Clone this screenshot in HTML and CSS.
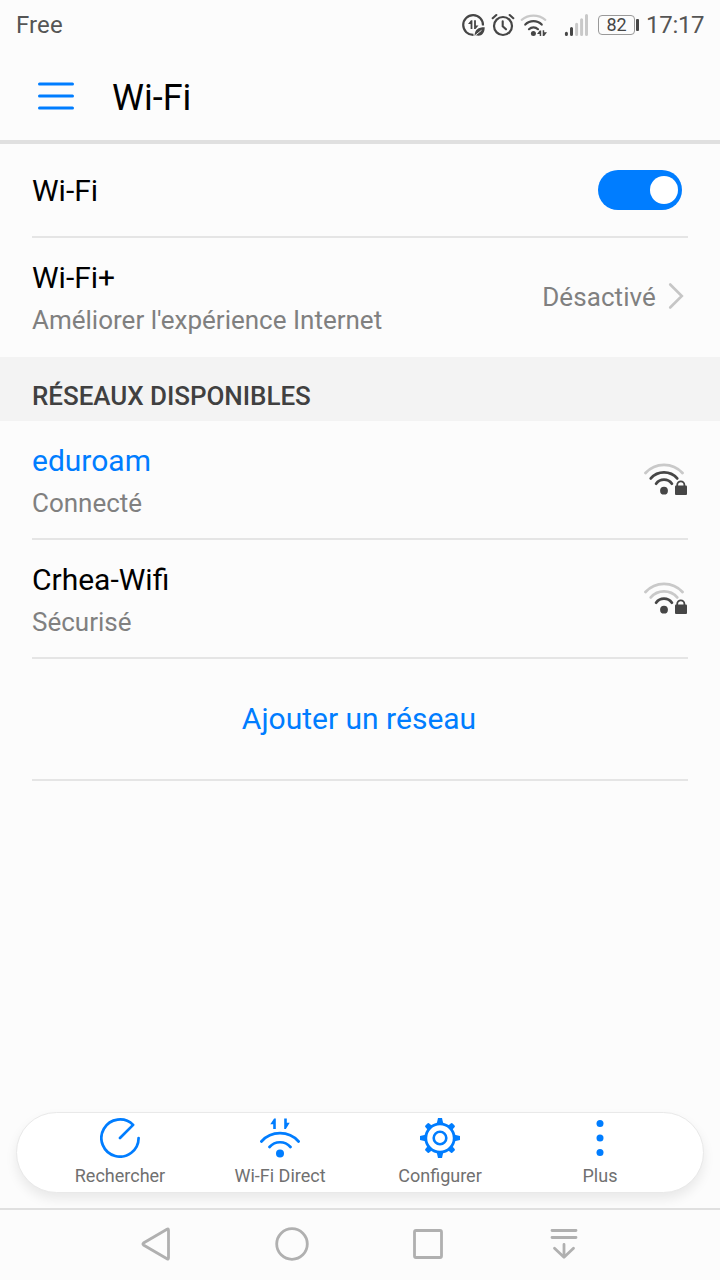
FILE: index.html
```html
<!DOCTYPE html>
<html lang="fr">
<head>
<meta charset="utf-8">
<title>Wi-Fi</title>
<link rel="stylesheet" href="styles.css">
</head>
<body>
<div class="screen">
  <div class="status">
    <span class="carrier">Free</span>
    <div class="status-icons">
      <svg class="saver" width="24" height="24" viewBox="461 12 24 24">
        <path d="M473.5 33.9A9.9 9.9 0 1 1 483 24.5" fill="none" stroke="#464646" stroke-width="2.2"/>
        <path d="M472.4 19.2V28H470.6V23H468L471 19.2ZM474.1 19.2H475.9V24.4H478.5L475.5 28H474.1Z" fill="#464646"/>
        <path d="M474.5 35C475 28.5 478 26.3 484.7 26.3C484.7 33 481 36 475.8 34.3Z" fill="#464646"/>
        <path d="M474.5 35L481.5 29.3" stroke="#fcfcfc" stroke-width=".9"/>
      </svg>
      <svg class="alarm" width="24" height="24" viewBox="491 12 24 24" fill="none" stroke="#464646" stroke-linecap="round">
        <circle cx="503" cy="25" r="9" stroke-width="2.2"/>
        <path d="M502.7 20.3V25.2L506 28.3M492.7 17.2L496.3 14M509.7 14L513.3 17.2" stroke-width="2.1"/>
      </svg>
      <svg class="wifi-status" width="28" height="24" viewBox="520 12 28 24" fill="none" stroke-width="2.2" stroke-linecap="round">
        <path d="M521.7 18.8A19 19 0 0 1 545.3 18.8" stroke="#c9c9c9"/>
        <path d="M525.3 23.6A11.5 11.5 0 0 1 541.7 23.6M529 28.2A6.5 6.5 0 0 1 538 28.2" stroke="#464646"/>
        <circle cx="533.4" cy="32.4" r="2.5" fill="#464646"/>
        <path d="M541.2 29.5V35H539.7V33H537L539.7 29.5ZM542.7 29.3H544.2V31.3H547L544.2 35H542.7Z" fill="#464646"/>
      </svg>
      <svg class="signal" width="24" height="24" viewBox="564 12 24 24" stroke-width="3" stroke-linecap="round">
        <path d="M566.4 32.3V33.4M571.5 27.6V33.4" stroke="#464646"/>
        <path d="M576.6 23.2V33.4M581.6 18.8V33.4M586.5 14.5V33.4" stroke="#c9c9c9"/>
      </svg>
      <div class="battery"><span>82</span></div>
      <span class="clock">17:17</span>
    </div>
  </div>

  <header class="header">
    <svg class="menu" width="36" height="28" viewBox="0 0 36 28"><path d="M1.5 2H34.5M1.5 14H34.5M1.5 26H34.5" stroke="#007dff" stroke-width="3" stroke-linecap="round"/></svg>
    <h1>Wi-Fi</h1>
  </header>

  <main class="content">
    <div class="row toggle-row">
      <span class="label">Wi-Fi</span>
      <div class="switch"><div class="knob"></div></div>
    </div>
    <div class="row detail last">
      <div>
        <div class="label">Wi-Fi+</div>
        <div class="sub">Améliorer l'expérience Internet</div>
      </div>
      <div class="value">
        <span>Désactivé</span>
        <svg width="16" height="28" viewBox="0 0 16 28"><path d="M2.2 2.5L13.8 14L2.2 25.5" fill="none" stroke="#c6c6c6" stroke-width="2.6" stroke-linecap="round"/></svg>
      </div>
    </div>
    <h2 class="section">RÉSEAUX DISPONIBLES</h2>
    <div class="row detail">
      <div>
        <div class="label connected">eduroam</div>
        <div class="sub">Connecté</div>
      </div>
      <svg class="strength" width="44" height="34" viewBox="644 462 44 34" fill="none" stroke-width="2.8" stroke-linecap="round">
        <path d="M645.5 473A25 25 0 0 1 682.5 473" stroke="#c9c9c9"/>
        <path d="M650.8 478.4A17.5 17.5 0 0 1 677.2 478.4M656.1 483.7A9.7 9.7 0 0 1 671.9 483.7" stroke="#464646"/>
        <circle cx="664" cy="490.7" r="3.9" fill="#464646"/>
        <path d="M677.2 486.5V485A3.6 3.6 0 0 1 684.4 485V486.5" stroke="#464646" stroke-width="1.8"/>
        <rect x="675" y="485.5" width="12" height="9.5" rx="1" fill="#464646"/>
      </svg>
    </div>
    <div class="row detail">
      <div>
        <div class="label">Crhea-Wifi</div>
        <div class="sub">Sécurisé</div>
      </div>
      <svg class="strength" width="44" height="34" viewBox="644 462 44 34" fill="none" stroke-width="2.8" stroke-linecap="round">
        <path d="M645.5 473A25 25 0 0 1 682.5 473M650.8 478.4A17.5 17.5 0 0 1 677.2 478.4" stroke="#c9c9c9"/>
        <path d="M656.1 483.7A9.7 9.7 0 0 1 671.9 483.7" stroke="#464646"/>
        <circle cx="664" cy="490.7" r="3.9" fill="#464646"/>
        <path d="M677.2 486.5V485A3.6 3.6 0 0 1 684.4 485V486.5" stroke="#464646" stroke-width="1.8"/>
        <rect x="675" y="485.5" width="12" height="9.5" rx="1" fill="#464646"/>
      </svg>
    </div>
    <div class="row add">Ajouter un réseau</div>
  </main>

  <div class="actions">
    <div class="action">
      <svg width="40" height="40" viewBox="0 0 40 40"><path d="M20 20L33.15 6.85A18.6 18.6 0 1 0 38.6 20" fill="none" stroke="#007dff" stroke-width="2.7" stroke-linecap="round" stroke-linejoin="round"/></svg>
      <span>Rechercher</span>
    </div>
    <div class="action">
      <svg width="40" height="40" viewBox="0 0 40 40"><path d="M1.4 23.5A25 25 0 0 1 38.6 23.5M9.5 29A14 14 0 0 1 30.5 29" fill="none" stroke="#007dff" stroke-width="2.7" stroke-linecap="round"/><circle cx="20" cy="35.5" r="4" fill="#007dff"/><path d="M15.8 .5V11H13.2V6.3H10.3L14.1 .5ZM24.2 .5H26.8V4.7H29.7L25.9 11H24.2Z" fill="#007dff"/></svg>
      <span>Wi-Fi Direct</span>
    </div>
    <div class="action">
      <svg width="40" height="40" viewBox="0 0 40 40" fill="none" stroke="#007dff">
        <circle cx="20" cy="20" r="14.2" stroke-width="2.8"/><circle cx="20" cy="20" r="6.3" stroke-width="2.6"/>
        <g fill="#007dff" stroke="none">
          <path id="tooth" d="M16.5 6.5L18 0H22L23.5 6.5Z"/><use href="#tooth" transform="rotate(90 20 20)"/><use href="#tooth" transform="rotate(180 20 20)"/><use href="#tooth" transform="rotate(270 20 20)"/>
          <path id="nub" d="M17 6.5L17.4 1.8Q17.6 .8 18.6 .8H21.4Q22.4 .8 22.6 1.8L23 6.5Z" transform="rotate(45 20 20)"/><use href="#nub" transform="rotate(90 20 20)"/><use href="#nub" transform="rotate(180 20 20)"/><use href="#nub" transform="rotate(270 20 20)"/>
        </g>
      </svg>
      <span>Configurer</span>
    </div>
    <div class="action">
      <svg width="40" height="40" viewBox="0 0 40 40" fill="#007dff"><circle cx="20" cy="5.5" r="3.5"/><circle cx="20" cy="20" r="3.5"/><circle cx="20" cy="34.5" r="3.5"/></svg>
      <span>Plus</span>
    </div>
  </div>

  <nav class="navbar">
    <svg width="36" height="36" viewBox="138 1226 36 36"><path d="M168.5 1230.2V1257.8Q168.5 1259.6 167 1258.7L143.5 1245Q142.3 1244 143.5 1243L167 1229.3Q168.5 1228.4 168.5 1230.2Z"/></svg>
    <svg width="36" height="36" viewBox="0 0 36 36"><circle cx="18" cy="18" r="15.3"/></svg>
    <svg width="36" height="36" viewBox="0 0 36 36"><rect x="4.5" y="4.5" width="27" height="27" rx="1.5"/></svg>
    <svg width="36" height="36" viewBox="0 0 36 36" stroke-linecap="round" stroke-linejoin="round"><path d="M6 4.5H30M6 11.5H30M18 18.5V31M8.5 22.2L18 31.3L27.5 22.2"/></svg>
  </nav>
</div>
</body>
</html>
```
FILE: styles.css
```css
* { box-sizing: border-box; }
body { margin: 0; background: #fcfcfc; font-family: Roboto, "Noto Sans", sans-serif; }
svg { display: block; flex: none; }
.screen { width: 720px; height: 1280px; display: flex; flex-direction: column; overflow: hidden; }
.status { height: 49px; padding: 0 16px; display: flex; justify-content: space-between; align-items: center; color: #555; font-size: 24px; }
.carrier { padding-top: 1px; line-height: 28px; letter-spacing: .1px; }
.status-icons { display: flex; align-items: center; }
.alarm { margin-left: 6px; }
.wifi-status { margin-left: 5px; }
.signal { margin-left: 16px; }
.battery { width: 41px; height: 20px; margin: 0 7px 0 10px; display: flex; align-items: center; }
.battery span { width: 37px; height: 20px; border: 1.5px solid #999; border-radius: 4px; font-size: 18px; line-height: 18px; text-align: center; color: #464646; }
.battery::after { content: ""; width: 3px; height: 12px; margin-left: 1px; border-radius: 1px; background: #464646; }
.clock { width: 58px; padding-top: 1px; line-height: 28px; letter-spacing: -.3px; white-space: nowrap; }
.header { height: 95px; padding: 4px 38px 0; display: flex; align-items: center; gap: 38px; border-bottom: 4px solid #e0e0e0; }
.menu { margin-bottom: 2px; }
h1 { margin: 2px 0 0; font-size: 36px; font-weight: 400; line-height: 44px; color: #000; }
.content { flex: 1; }
.row { margin: 0 32px; border-bottom: 2px solid #e5e5e5; display: flex; justify-content: space-between; }
.label { font-size: 30px; line-height: 44px; color: #000; }
.connected { color: #007dff; }
.sub { font-size: 26px; line-height: 40px; color: #808080; }
.toggle-row { height: 94px; align-items: center; padding-right: 6px; }
.toggle-row .label { padding-top: 2px; }
.switch { width: 84px; height: 40px; border-radius: 20px; background: #007dff; padding: 6px 4px; display: flex; justify-content: flex-end; }
.knob { width: 28px; height: 28px; border-radius: 50%; background: #fff; }
.detail { height: 119px; padding-top: 18px; }
.last { border-bottom: 0; }
.value { height: 82px; display: flex; align-items: center; gap: 12px; padding-right: 4px; font-size: 26px; letter-spacing: .08px; color: #808080; }
.value svg { margin-bottom: 2px; }
.section { margin: 0; height: 64px; padding: 14px 32px 0; background: #f3f3f3; color: #404040; font-size: 26px; font-weight: 500; line-height: 50px; letter-spacing: -.05px; }
.strength { margin-top: 23px; }
.add { height: 122px; padding: 0 2px 2px 0; align-items: center; justify-content: center; font-size: 30px; color: #007dff; }
.actions { height: 81px; margin: 0 16px 15px; padding: 5px 23px 0; display: flex; background: #fff; border: 1px solid #e9e9e9; border-radius: 41px; box-shadow: 0 6px 12px rgba(0, 0, 0, .08); }
.action { flex: 1; display: flex; flex-direction: column; align-items: center; font-size: 18px; line-height: 36px; color: #707070; }
.navbar { height: 72px; border-top: 2px solid #e0e0e0; padding: 0 138px 2px; display: flex; justify-content: space-between; align-items: center; background: #fcfcfc; }
.navbar svg { fill: none; stroke: #b0b0b0; stroke-width: 2.8; }
```
